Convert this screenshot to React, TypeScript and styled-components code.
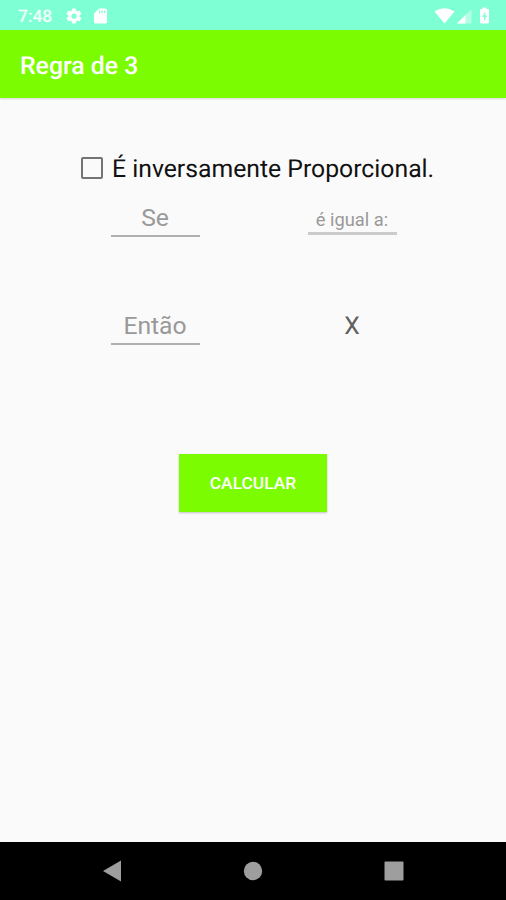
import React from "react";
import styled, { createGlobalStyle } from "styled-components";

const GlobalStyle = createGlobalStyle`
  * { box-sizing: border-box; }
  body { margin: 0; background: #fafafa; font-family: Roboto, sans-serif; text-rendering: geometricPrecision; }
`;

const Screen = styled.div`
  display: flex;
  flex-direction: column;
  width: 506px;
  height: 900px;
  overflow: hidden;
  background: #fafafa;
`;

const StatusBar = styled.header`
  display: flex;
  align-items: center;
  justify-content: space-between;
  height: 30px;
  padding: 1px 14px 0 18px;
  background: #7fffd4;
  color: #fff;
`;

const StatusGroup = styled.div<{ $gap: number }>`
  display: flex;
  align-items: center;
  gap: ${({ $gap }) => $gap}px;
`;

const Clock = styled.span`
  width: 34px;
  margin-right: 2px;
  padding-top: 2px;
  font-size: 17.4px;
  line-height: 28px;
  font-weight: 500;
  white-space: nowrap;
  opacity: 0.9;
`;

const StatusIcon = styled.svg`
  display: block;
  fill: #fff;
`;

const AppBar = styled.div`
  display: flex;
  align-items: center;
  height: 68px;
  padding: 5px 20px 0;
  background: #7cfc00;
  box-shadow: 0 1px 2px rgba(0, 0, 0, 0.14);
`;

const Title = styled.h1`
  margin: 0;
  color: #fff;
  font-size: 24.8px;
  line-height: 30px;
  font-weight: 500;
`;

const Content = styled.main`
  display: flex;
  flex: 1;
  flex-direction: column;
  align-items: flex-start;
  padding-top: 54px;
`;

const CheckRow = styled.label`
  display: flex;
  align-items: center;
  gap: 9px;
  height: 32px;
  margin-left: 81px;
  color: #111;
  font-size: 24.75px;
  line-height: 32px;
  white-space: nowrap;
`;

const CheckLabel = styled.span`
  padding-top: 3px;
`;

const CheckBox = styled.input`
  appearance: none;
  width: 22px;
  height: 22px;
  margin: 0;
  border: 2px solid #737373;
  border-radius: 2px;
`;

const FieldRow = styled.div<{ $top: number }>`
  display: grid;
  grid-template-columns: 89px 89px;
  column-gap: 108px;
  align-items: start;
  margin: ${({ $top }) => $top}px 0 0 110.5px;
`;

const Field = styled.input<{ $small?: boolean }>`
  width: 89px;
  height: ${({ $small }) => ($small ? 35 : 37)}px;
  padding: ${({ $small }) => ($small ? "7px 0 0" : "0 0 1px")};
  border: 0;
  border-bottom: ${({ $small }) => ($small ? "3px solid #cbcbcb" : "2px solid #b0b0b0")};
  border-radius: 0;
  outline: 0;
  background: transparent;
  font-family: inherit;
  font-size: ${({ $small }) => ($small ? 18.3 : 24.7)}px;
  text-align: center;

  &::placeholder {
    color: #999;
    opacity: 1;
  }
`;

const Unknown = styled.span`
  padding-top: 1px;
  color: #606060;
  font-size: 24.7px;
  line-height: 36px;
  text-align: center;
`;

const Button = styled.button`
  align-self: center;
  width: 148px;
  height: 58px;
  margin: 109px 0 0;
  padding: 0;
  border: 0;
  background: #7cfc00;
  box-shadow: 0 1px 2px rgba(0, 0, 0, 0.24);
  color: #fff;
  font-family: inherit;
  font-size: 17.4px;
  font-weight: 500;
`;

const NavBar = styled.nav`
  display: flex;
  align-items: center;
  height: 58px;
  padding: 0 102px;
  justify-content: space-between;
  background: #000;
`;

const NavIcon = styled.svg`
  display: block;
  fill: #9e9e9e;
`;

export default function App() {
  return (
    <Screen>
      <GlobalStyle />
      <StatusBar>
        <StatusGroup $gap={10.5}>
          <Clock>7:48</Clock>
          <StatusIcon width="18" height="18" viewBox="0 0 24 24">
            <path d="M19.4 13a7.7 7.7 0 0 0 0-2l2.1-1.6c.2-.2.3-.4.1-.7l-2-3.4c-.1-.2-.4-.3-.6-.2l-2.5 1a7 7 0 0 0-1.7-1l-.4-2.6a.5.5 0 0 0-.5-.5h-4a.5.5 0 0 0-.5.5L9 5.1a7 7 0 0 0-1.7 1l-2.5-1c-.2-.1-.5 0-.6.2l-2 3.4c-.1.2-.1.5.1.7L4.5 11a8 8 0 0 0 0 2l-2.2 1.6c-.2.2-.2.4-.1.7l2 3.4c.1.2.4.3.6.2l2.5-1a7 7 0 0 0 1.7 1l.4 2.6c0 .3.2.5.5.5h4c.3 0 .5-.2.5-.5l.4-2.6a7 7 0 0 0 1.7-1l2.5 1c.2.1.5 0 .6-.2l2-3.4c.1-.2.1-.5-.1-.7zM12 15.5a3.5 3.5 0 1 1 0-7 3.5 3.5 0 0 1 0 7z" />
          </StatusIcon>
          <StatusIcon width="15" height="16" viewBox="0 0 15 16">
            <path fillRule="evenodd" d="M6 .5H12.500A1.500 1.500 0 0 1 14 2V14A1.500 1.500 0 0 1 12.500 15.500H2.500A1.500 1.500 0 0 1 1 14V5.500ZM6 2.600V5.200H7.200V2.600ZM8.500 2.600V5.200H9.700V2.600ZM11 2.600V5.200H12.200V2.600Z" />
          </StatusIcon>
        </StatusGroup>
        <StatusGroup $gap={1.5}>
          <StatusIcon width="21" height="16" viewBox="0 0 21 16">
            <path d="M.5 3.500Q10.500-3 20.500 3.500L10.500 15.500Z" />
          </StatusIcon>
          <StatusIcon width="15" height="16" viewBox="0 0 15 16">
            <path d="M0 15.500 14.500 1V15.500Z" opacity=".4" />
            <path d="M0 15.500 8.500 7V15.500Z" />
          </StatusIcon>
          <StatusIcon width="19" height="17" viewBox="-1.500 0 19 17">
            <path fillRule="evenodd" d="M8 .5h4v1.500h1.500q1 0 1 1v12.500q0 1-1 1h-7q-1 0-1-1V3q0-1 1-1H8ZM10.800 4.500 7.500 10h2v4l3.200-5.500h-1.900Z" />
          </StatusIcon>
        </StatusGroup>
      </StatusBar>
      <AppBar>
        <Title>Regra de 3</Title>
      </AppBar>
      <Content>
        <CheckRow>
          <CheckBox type="checkbox" />
          <CheckLabel>É inversamente Proporcional.</CheckLabel>
        </CheckRow>
        <FieldRow $top={16}>
          <Field placeholder="Se" />
          <Field $small placeholder="é igual a:" />
        </FieldRow>
        <FieldRow $top={71}>
          <Field placeholder="Então" />
          <Unknown>X</Unknown>
        </FieldRow>
        <Button>CALCULAR</Button>
      </Content>
      <NavBar>
        <NavIcon width="20" height="22" viewBox="0 0 20 22">
          <path d="M1 11 19 .5V21.500Z" />
        </NavIcon>
        <NavIcon width="20" height="20" viewBox="0 0 20 20">
          <circle cx="10" cy="10" r="9.200" />
        </NavIcon>
        <NavIcon width="20" height="20" viewBox="0 0 20 20">
          <rect x=".5" y=".5" width="19" height="19" rx="1" />
        </NavIcon>
      </NavBar>
    </Screen>
  );
}
